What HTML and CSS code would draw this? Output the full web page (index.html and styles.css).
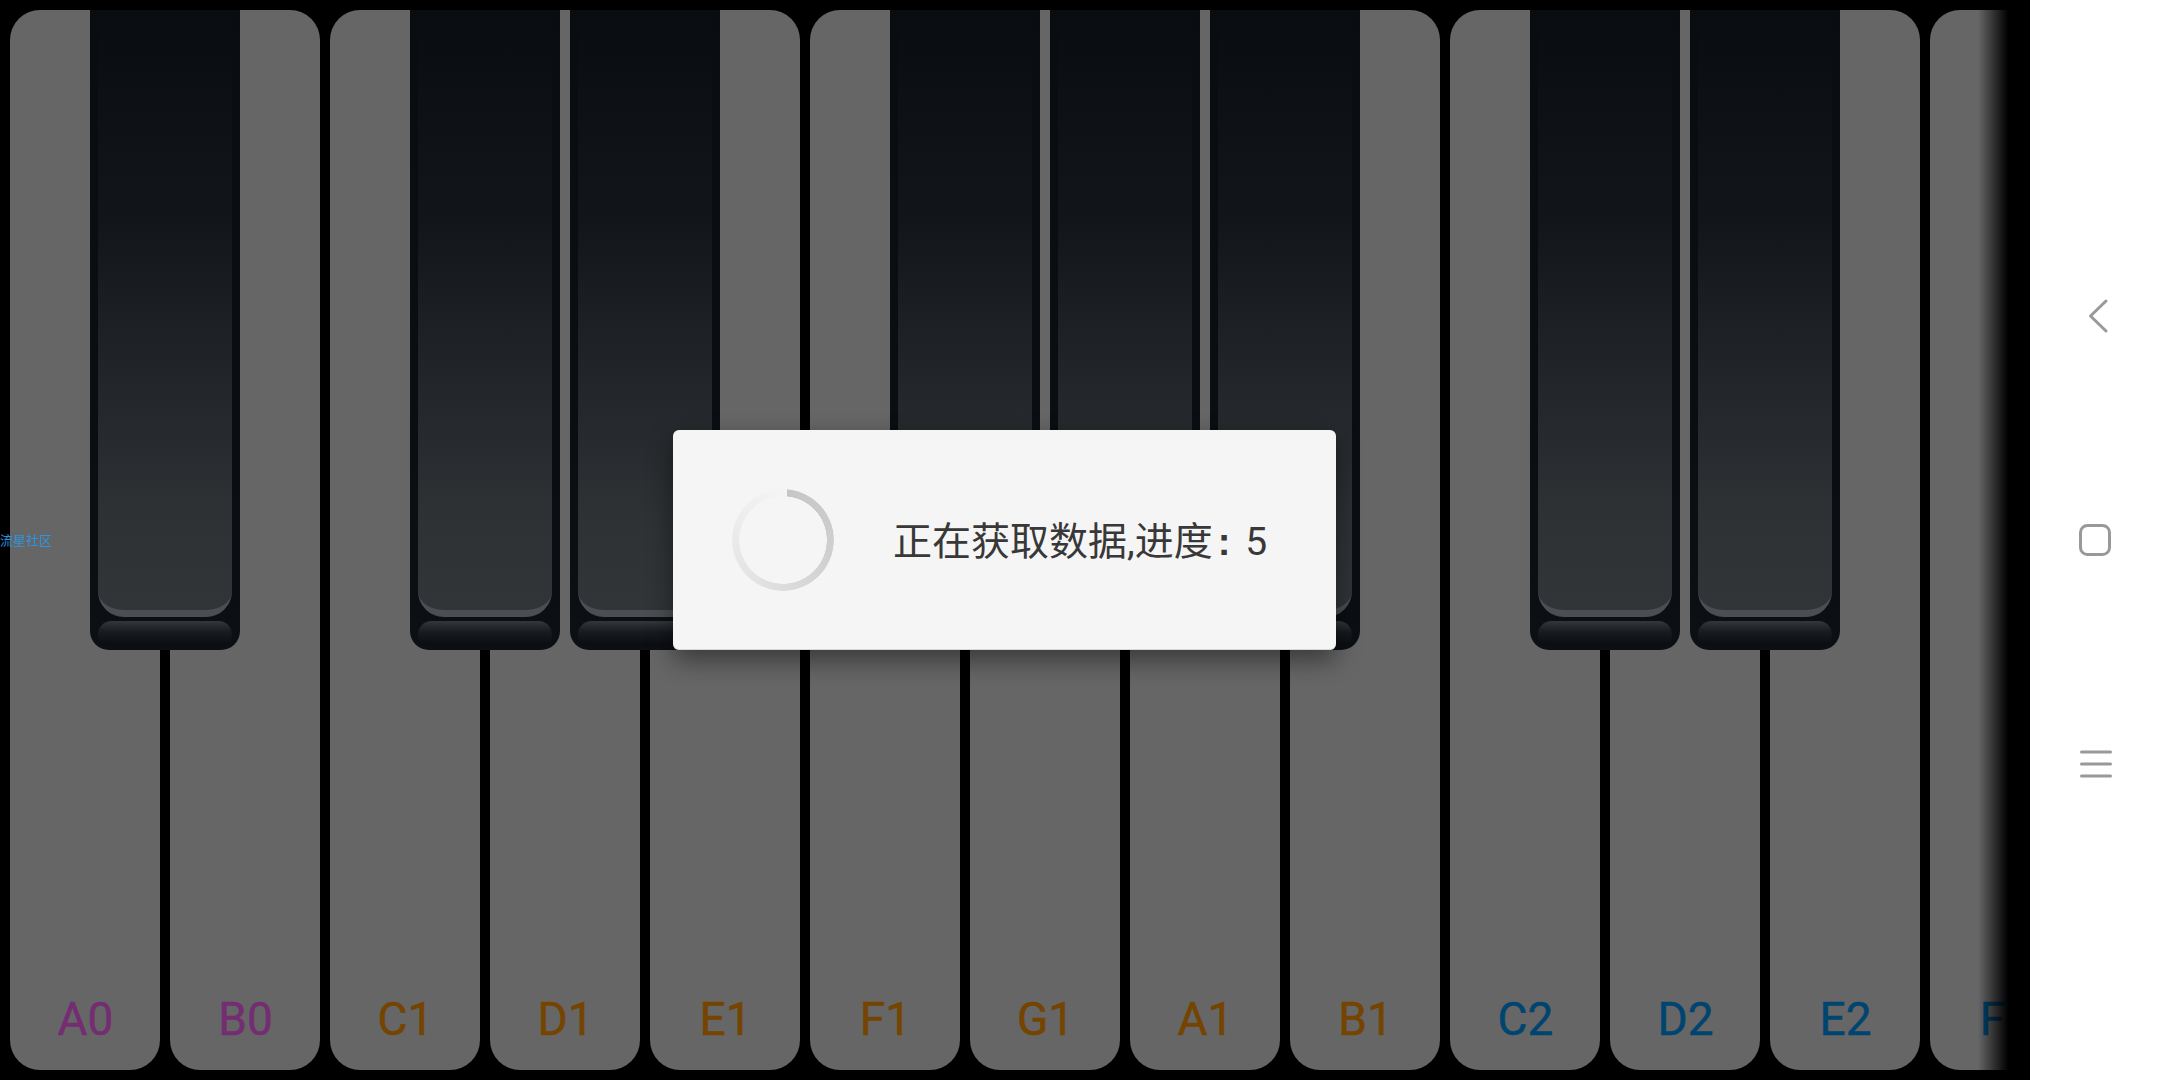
FILE: index.html
```html
<!DOCTYPE html>
<html lang="zh">
<head>
<meta charset="utf-8">
<title>Piano</title>
<link rel="stylesheet" href="styles.css">
</head>
<body>
<div class="screen">
  <main class="piano">
    <div class="white-keys">
      <div class="white-key purple">A0</div>
      <div class="white-key purple">B0</div>
      <div class="white-key brown">C1</div>
      <div class="white-key brown">D1</div>
      <div class="white-key brown">E1</div>
      <div class="white-key brown">F1</div>
      <div class="white-key brown">G1</div>
      <div class="white-key brown">A1</div>
      <div class="white-key brown">B1</div>
      <div class="white-key blue">C2</div>
      <div class="white-key blue">D2</div>
      <div class="white-key blue">E2</div>
      <div class="white-key blue">F2</div>
    </div>
    <div class="black-keys">
      <div class="black-key"><div class="face"></div><div class="lip"></div></div>
      <div class="black-key wide"><div class="face"></div><div class="lip"></div></div>
      <div class="black-key"><div class="face"></div><div class="lip"></div></div>
      <div class="black-key wide"><div class="face"></div><div class="lip"></div></div>
      <div class="black-key"><div class="face"></div><div class="lip"></div></div>
      <div class="black-key"><div class="face"></div><div class="lip"></div></div>
      <div class="black-key wide"><div class="face"></div><div class="lip"></div></div>
      <div class="black-key"><div class="face"></div><div class="lip"></div></div>
    </div>
    <div class="edge-fade"></div>
    <div class="watermark">流星社区</div>
    <div class="dialog">
      <div class="spinner"></div>
      <div class="message">正在获取数据,进度<span class="colon">:</span>5</div>
    </div>
  </main>
  <nav class="nav">
    <svg class="nav-icon" viewBox="0 0 40 40"><path d="M31 5 L15.5 20 L31 35"/></svg>
    <svg class="nav-icon" viewBox="0 0 40 40"><rect x="5.5" y="5.5" width="29" height="29" rx="7"/></svg>
    <svg class="nav-icon" viewBox="0 0 40 40"><path d="M6.5 8H35.5M6.5 20H35.5M6.5 32H35.5"/></svg>
  </nav>
</div>
</body>
</html>
```
FILE: styles.css
```css
* { box-sizing: border-box; }
html, body { margin: 0; padding: 0; background: #fff; }
.screen { display: flex; width: 2160px; height: 1080px; overflow: hidden; }
.piano { position: relative; flex: none; width: 2030px; height: 1080px; background: #000; overflow: hidden; }
.white-keys { display: flex; gap: 10px; padding: 10px; width: 2200px; height: 1080px; }
.white-key {
  flex: none; width: 150px; height: 1060px; background: #666; border-radius: 30px;
  display: flex; align-items: flex-end; justify-content: center;
  padding-bottom: 28px; padding-left: 1px; font: 400 46px/46px Roboto, sans-serif;
  -webkit-text-stroke: 0.5px currentColor;
}
.purple { color: #742d72; }
.brown { color: #744400; }
.blue { color: #004470; }
.black-keys { position: absolute; left: 90px; top: 10px; display: flex; gap: 10px; }
.black-key {
  flex: none; position: relative; width: 150px; height: 640px;
  border-radius: 0 0 19px 19px;
  background: linear-gradient(#090c10, #0a0d11 60%, #0c0f13);
  padding: 0 8px;
}
.black-key.wide { margin-left: 160px; }
.face {
  height: 607px; border-radius: 0 0 26px 26px;
  border-bottom: 7px solid #4c4f52;
  background: linear-gradient(#090c10, #12161a 35%, #212428 60%, #2e3235 85%, #323538);
}
.lip {
  position: absolute; left: 8px; right: 8px; top: 611px; height: 25px;
  border-radius: 14px 14px 12px 12px;
  background: linear-gradient(#34383c, #171a1e 45%, #0a0c10);
}
.edge-fade {
  position: absolute; left: 1978px; top: 0; width: 52px; height: 1080px;
  background: linear-gradient(to right, rgba(0,0,0,0), #000 58%);
}
.watermark {
  position: absolute; left: 0; top: 532px; font: 13px/16px "Noto Sans CJK SC", sans-serif; color: #2f93dd;
}
.dialog {
  position: absolute; left: 673px; top: 430px; width: 663px; height: 220px;
  display: flex; align-items: center; padding-left: 59px; gap: 59px;
  background: #f5f5f5; border-radius: 6px; border-bottom: 1px solid #d8d8d8;
  box-shadow: 0 10px 26px rgba(0,0,0,.45);
}
.spinner {
  flex: none; width: 102px; height: 102px; border-radius: 50%;
  background: conic-gradient(from 5deg, #c6c6c6, #d0d0d0 30%, #e4e4e4 60%, #f5f5f5);
  -webkit-mask: radial-gradient(closest-side, transparent calc(100% - 7.5px), #000 calc(100% - 7px));
  mask: radial-gradient(closest-side, transparent calc(100% - 7.5px), #000 calc(100% - 7px));
}
.message { padding-top: 4px; font: 400 39px/44px Roboto, "Noto Sans CJK SC", sans-serif; color: #383838; white-space: nowrap; }
.colon { margin: 0 15px 0 5px; font: 700 38px/44px "Liberation Sans", sans-serif; }
.nav { flex: 1; display: flex; flex-direction: column; align-items: center; justify-content: center; gap: 184px; background: #fff; }
.nav-icon { width: 40px; height: 40px; fill: none; stroke: #999; stroke-width: 3; stroke-linecap: round; stroke-linejoin: round; }
```
